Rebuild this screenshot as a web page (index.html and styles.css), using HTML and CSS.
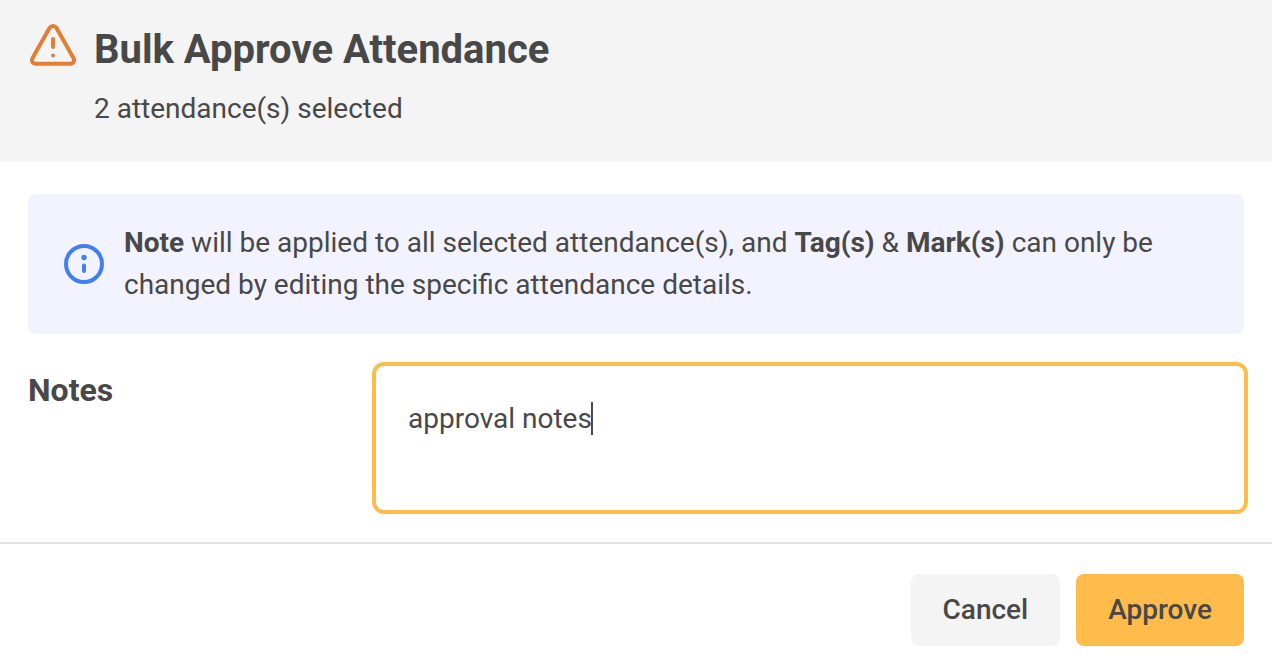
FILE: index.html
```html
<!DOCTYPE html>
<html lang="en">
<head>
    <meta charset="UTF-8">
    <meta name="viewport" content="width=device-width, initial-scale=1.0">
    <title>Bulk Approve Attendance</title>
    <link rel="stylesheet" href="styles.css">
</head>
<body>
    <form id="approveForm" class="dialog">
        <header class="dialog-header">
            <svg class="warning-icon" width="50" height="48" viewBox="0 0 50 48" fill="none" stroke="#e27f35" stroke-width="4" stroke-linecap="round" stroke-linejoin="round" aria-hidden="true">
                <path d="M21.500 6 L4.700 35.800 C2.800 39 4.600 41.800 8 41.800 H42 C45.400 41.800 47.200 39 45.300 35.800 L28.500 6 C26.800 3.300 23.200 3.300 21.500 6 Z"/>
                <path d="M25 17 V25"/>
                <path d="M25 33.400 V33.500"/>
            </svg>
            <div>
                <h1>Bulk Approve Attendance</h1>
                <p class="subtitle">2 attendance(s) selected</p>
            </div>
        </header>

        <main class="dialog-body">
            <div class="info">
                <svg class="info-icon" width="40" height="40" viewBox="0 0 40 40" fill="none" stroke="#4080f0" stroke-width="4" stroke-linecap="round" aria-hidden="true">
                    <circle cx="20" cy="20" r="18"/>
                    <path d="M20 21.500 V27"/>
                    <circle cx="20" cy="13.500" r="2.700" fill="#4080f0" stroke="none"/>
                </svg>
                <p><strong>Note</strong> will be applied to all selected attendance(s), and <strong>Tag(s)</strong> &amp; <strong>Mark(s)</strong> can only be changed by editing the specific attendance details.</p>
            </div>

            <div class="field">
                <label for="notes">Notes</label>
                <div class="notes-box">
                    <textarea id="notes" name="notes">approval notes</textarea>
                    <span class="caret"></span>
                </div>
            </div>
        </main>

        <footer class="dialog-footer">
            <button type="button" class="btn">Cancel</button>
            <button type="submit" class="btn btn-primary">Approve</button>
        </footer>
    </form>
</body>
</html>
```

FILE: styles.css
```css
* {
    box-sizing: border-box;
}

body {
    margin: 0;
    background-color: #fff;
    color: #484848;
    font-family: Roboto, "Liberation Sans", sans-serif;
    font-size: 28px;
    line-height: 42px;
}

h1,
p {
    margin: 0;
}

.dialog-header {
    display: flex;
    gap: 16px;
    padding: 22px 28px 32px;
    background-color: #f4f4f4;
}

h1 {
    font-size: 40px;
    line-height: 56px;
    font-weight: 700;
}

.subtitle {
    margin-top: 10px;
}

.warning-icon,
.info-icon {
    flex: none;
}

.dialog-body {
    padding: 32px 28px 28px;
}

.info {
    display: flex;
    align-items: center;
    gap: 20px;
    padding: 28px 36px;
    border-radius: 8px;
    background-color: #f3f3ff;
}

.field {
    display: flex;
    margin-top: 28px;
    margin-right: -4px;
}

.field label {
    flex: none;
    width: 344px;
    padding-top: 8px;
    font-size: 32px;
    line-height: 40px;
    font-weight: 700;
}

.notes-box {
    position: relative;
    flex: 1;
}

.notes-box textarea {
    display: block;
    width: 100%;
    height: 152px;
    padding: 32px;
    border: 4px solid #ffbc4b;
    border-radius: 12px;
    outline: none;
    background-color: #fff;
    color: inherit;
    font: inherit;
    resize: none;
}

/* text cursor at the end of the note, hidden once the real one shows */
.caret {
    position: absolute;
    top: 40px;
    left: 219px;
    width: 2px;
    height: 33px;
    background-color: #484848;
    pointer-events: none;
}

.notes-box textarea:focus + .caret {
    display: none;
}

.dialog-footer {
    display: flex;
    justify-content: flex-end;
    gap: 16px;
    padding: 30px 28px 22px;
    border-top: 2px solid #e2e2e2;
}

.btn {
    height: 72px;
    padding: 0 32px;
    border: 0;
    border-radius: 8px;
    background-color: #f4f4f4;
    color: inherit;
    font: inherit;
    font-weight: 500;
    cursor: pointer;
}

.btn-primary {
    background-color: #ffbc4b;
}
```
